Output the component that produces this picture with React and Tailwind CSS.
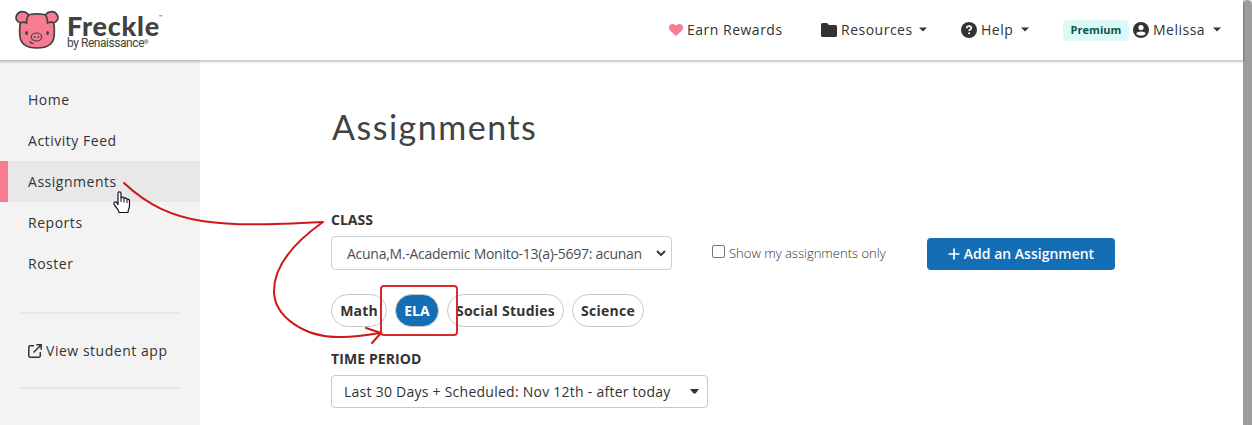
const NAV = ['Home', 'Activity Feed', 'Assignments', 'Reports', 'Roster']

function PigLogo() {
  return (
    <svg width="44" height="40" viewBox="0 0 44 40" fill="none" stroke="#424242" strokeWidth="1.7" strokeLinejoin="round" strokeLinecap="round">
      <path d="M6 10C4.800 14 4.500 20 4.800 25C5.200 34 11 38 22 38C33 38 38.800 34 39.200 25C39.500 20 39.200 14 38 10C35 4.500 29 3.800 22 3.800C15 3.800 9 4.500 6 10Z" fill="#f77b91" />
      <path d="M13.500 4.500C10 .5 4 .8 1.800 5C-.3 9 2.500 12 5.500 12.800C7.500 12 9.500 12 11.500 13C11.500 9.500 12 7 13.500 4.500Z" fill="#f77b91" />
      <path d="M30.500 4.500C34 .5 40 .8 42.200 5C44.300 9 41.500 12 38.500 12.800C36.500 12 34.500 12 32.500 13C32.500 9.500 32 7 30.500 4.500Z" fill="#f77b91" />
      <ellipse cx="21.500" cy="27" rx="5.200" ry="4" strokeWidth="1.200" />
      <ellipse cx="19.700" cy="27" rx=".8" ry="1.100" fill="#424242" stroke="none" />
      <ellipse cx="23.300" cy="27" rx=".8" ry="1.100" fill="#424242" stroke="none" />
      <ellipse cx="11.600" cy="23" rx="1.400" ry="2" fill="#424242" stroke="none" />
      <ellipse cx="32.600" cy="23" rx="1.400" ry="2" fill="#424242" stroke="none" />
      <path d="M15 31.500C15.500 33 16.500 33.500 18 33.300" strokeWidth="1.300" />
    </svg>
  )
}

function Caret({ className }) {
  return (
    <svg width="8" height="5" viewBox="0 0 8 5" className={className}>
      <path d="M0 .5H8L4 4.500Z" fill="#333" />
    </svg>
  )
}

function Header() {
  return (
    <header className="relative z-10 flex h-[60px] shrink-0 bg-white text-[14px] text-[#333] shadow-[0_1px_2px_1px_rgba(0,0,0,0.22)]">
      <div className="flex pl-[15px] pt-[10px]">
        <PigLogo />
        <div className="ml-[8px] text-[#424242]">
          <div className="flex h-[27px] items-start">
            <span className="font-[Lato,sans-serif] text-[27px] font-black leading-[31px] tracking-[0.75px]">Freckle</span>
            <span className="-ml-px mt-[4px] font-[Roboto,sans-serif] text-[6px] leading-[6px]">™</span>
          </div>
          <div className="flex font-[Roboto,sans-serif] text-[12px] leading-[12px] tracking-[-0.45px]">
            by Renaissance<span className="text-[6px] leading-[9px]">®</span>
          </div>
        </div>
      </div>
      <div className="ml-auto flex items-center pb-px pr-[22px] tracking-[0.5px]">
        <svg width="14" height="12" viewBox="0 0 14 12" className="mr-[4px]">
          <path d="M7 12L1.200 6.500C-.6 4.700-.3 1.800 1.500.6C3.300-.5 5.500-.1 7 1.700C8.500-.1 10.700-.5 12.500.6C14.300 1.800 14.600 4.700 12.800 6.500Z" fill="#f77b91" />
        </svg>
        <span className="w-[134px]">Earn Rewards</span>
        <svg width="16" height="14" viewBox="0 0 16 14" className="mr-[4px]">
          <path d="M1.500 0H6L8 2H14.500Q16 2 16 3.500V12.500Q16 14 14.500 14H1.500Q0 14 0 12.500V1.500Q0 0 1.500 0Z" fill="#333" />
        </svg>
        <span className="w-[78px]">Resources</span>
        <Caret className="mr-[34px]" />
        <svg width="16" height="16" viewBox="0 0 16 16" className="mr-[4px]">
          <circle cx="8" cy="8" r="8" fill="#333" />
          <path d="M5.700 6.200C5.800 4.800 6.700 4.100 8 4.100C9.400 4.100 10.300 4.900 10.300 6C10.300 7.500 8.100 7.500 8.100 9" fill="none" stroke="#fff" strokeWidth="1.600" />
          <circle cx="8.100" cy="11.300" r="1" fill="#fff" />
        </svg>
        <span className="w-[40px]">Help</span>
        <Caret className="mr-[34px]" />
        <span className="mr-[4px] mt-px flex h-[21px] w-[66px] items-center justify-center rounded bg-[#dcfaf5] pt-px text-[11px] font-bold tracking-[0.05px] text-[#0d544b]">Premium</span>
        <svg width="16" height="16" viewBox="0 0 16 16" className="mr-[4px]">
          <circle cx="8" cy="8" r="8" fill="#333" />
          <circle cx="8" cy="5.500" r="2.600" fill="#fff" />
          <path d="M3.200 11.700C4.300 8.700 11.700 8.700 12.800 11.700C10.500 14.200 5.500 14.200 3.200 11.700Z" fill="#fff" />
        </svg>
        <span className="w-[60px]">Melissa</span>
        <Caret />
      </div>
    </header>
  )
}

function Sidebar() {
  return (
    <aside className="w-[200px] shrink-0 bg-[#f3f3f3] pt-[19px] text-[14px] tracking-[0.53px] text-[#333]">
      <nav>
        {NAV.map((item) => (
          <a
            key={item}
            className={
              item === 'Assignments'
                ? 'flex h-[41px] items-center border-l-8 border-[#f77b91] bg-[#e8e8e8] pl-5'
                : 'flex h-[41px] items-center pl-7'
            }
          >
            {item}
          </a>
        ))}
      </nav>
      <div className="mx-5 mt-[28px] flex h-[77px] items-center border-y-2 border-[#e8e8e8] pl-2">
        <svg width="14" height="14" viewBox="0 0 14 14" fill="none" stroke="#333" strokeWidth="1.500" className="mr-[4px]">
          <path d="M6 1.700H2.200Q.8 1.700 .8 3V11.800Q.8 13.200 2.200 13.200H11Q12.300 13.200 12.300 11.800V8" />
          <path d="M8.300 .8H13.200V5.700M13 1L5.500 8.500" />
        </svg>
        View student app
      </div>
    </aside>
  )
}

function Pill({ children, className }) {
  return (
    <button className={`flex h-[33px] items-center justify-center whitespace-nowrap rounded-full border border-[#c8c8c8] text-[14px] font-bold ${className}`}>
      {children}
    </button>
  )
}

function Annotations() {
  return (
    <svg width="1252" height="425" className="pointer-events-none absolute left-0 top-0 z-20" fill="none">
      <g stroke="#cf1717" strokeWidth="2" strokeLinecap="round" strokeLinejoin="round">
        <path d="M124 183C172 228 222 227 323 222C292 244 274 268 274 291C274 315 302 338 342 337C354 337 368 335 380 333" />
        <path d="M366 328L381 333L372 343" />
        <rect x="381" y="286" width="76" height="49" rx="3" stroke="#d52b2b" />
      </g>
      <path
        d="M118 204.500V193.500C118 191.200 121 191.200 121 193.500V198C122 196.500 124 197 124 198.500C125 197.500 127 198 127 199.500C128 198.700 129.500 199.500 129.500 201V206C129.500 208 128 209.500 128 212.500H119C119 210 115 206.500 114 204C113.300 202 115.500 201 117 203Z"
        fill="#fff" stroke="#101020" strokeWidth="1.200" strokeLinejoin="round"
      />
      <path d="M121 198V202M124 199V202.500M127 200V203" stroke="#101020" />
    </svg>
  )
}

export default function App() {
  return (
    <div className="relative flex h-[425px] w-[1252px] overflow-hidden bg-white font-['Open_Sans',sans-serif]">
      <div className="flex w-[1243px] flex-col">
        <Header />
        <div className="flex grow">
          <Sidebar />
          <main className="pl-[131px] text-[#333]">
            <h1 className="ml-px mt-[45px] font-[Lato,sans-serif] text-[34px] leading-[44px] tracking-[1.5px] text-[#424242]">Assignments</h1>
            <div className="mt-[61px] text-[14px] font-bold leading-[20px]">CLASS</div>
            <div className="mt-[6px] flex items-center">
              <div className="flex h-[34px] w-[341px] items-center rounded border border-[#c9ced4] pl-[15px] text-[14px] text-[#495057]">
                <span className="w-[309px] whitespace-nowrap tracking-[-0.27px]">Acuna,M.-Academic Monito-13(a)-5697: acunan</span>
                <svg width="10" height="7" viewBox="0 0 10 7" fill="none" stroke="#343a40" strokeWidth="2">
                  <path d="M1 1L5 5L9 1" />
                </svg>
              </div>
              <span className="ml-[40px] mb-[3px] h-[13px] w-[13px] rounded-[2px] border border-[#767676] bg-white" />
              <span className="ml-[4px] w-[198px] whitespace-nowrap pt-px text-[13px] font-light">Show my assignments only</span>
              <button className="mt-[2px] flex h-[32px] w-[188px] items-center justify-center rounded bg-[#146eb5] pb-px text-[14px] font-semibold text-white">
                <svg width="12" height="12" viewBox="0 0 12 12" className="mr-[4px]" stroke="#fff" strokeWidth="1.700">
                  <path d="M6 .5V11.500M.5 6H11.500" />
                </svg>
                Add an Assignment
              </button>
            </div>
            <div className="mt-[24px] flex">
              <Pill className="w-[56px] tracking-[0.2px]">Math</Pill>
              <Pill className="ml-[8px] w-[44px] bg-[#146eb5] text-white">ELA</Pill>
              <Pill className="ml-[8px] w-[117px] tracking-[0.25px]">Social Studies</Pill>
              <Pill className="ml-[8px] w-[72px] tracking-[0.25px]">Science</Pill>
            </div>
            <div className="mt-[22px] text-[14px] font-bold leading-[20px] tracking-[0.1px]">TIME PERIOD</div>
            <div className="mt-[6px] flex h-[33px] w-[377px] items-center rounded border border-[#c8c8c8] pl-[12px] text-[14px]">
              <span className="w-[346px] whitespace-nowrap tracking-[0.25px]">Last 30 Days + Scheduled: Nov 12th - after today</span>
              <svg width="9" height="5" viewBox="0 0 9 5">
                <path d="M0 0H9L5.500 4.500H3.500Z" fill="#333" />
              </svg>
            </div>
          </main>
        </div>
      </div>
      <div className="w-[9px] bg-[#f1f1f1]">
        <div className="h-[440px] rounded-t-full bg-[#9d9d9d]" />
      </div>
      <Annotations />
    </div>
  )
}
